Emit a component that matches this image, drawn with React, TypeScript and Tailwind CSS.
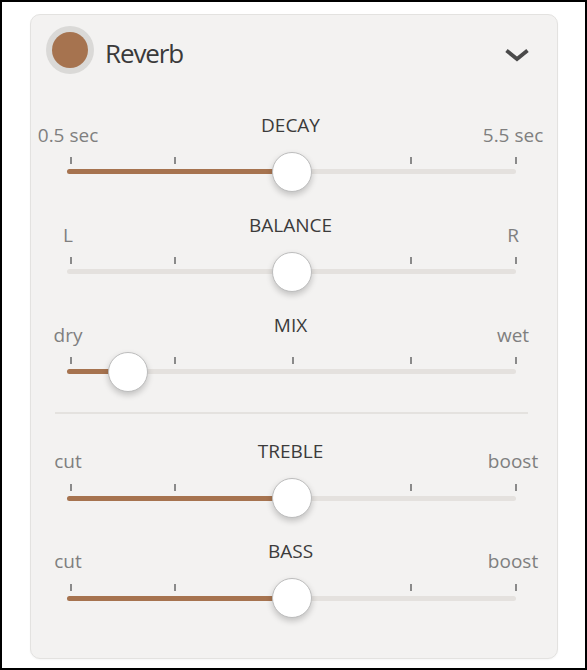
import React from 'react';

interface SliderProps {
  title: string;
  left: string;
  right: string;
  value: number;
  filled?: boolean;
}

// tick offsets along the 449px track
const TICKS = [3, 107, 225, 343, 448];

const Slider: React.FC<SliderProps> = ({ title, left, right, value, filled = true }) => {
  return (
    <div className="h-[100px] w-[449px]">
      <div className="flex h-[36px] justify-between">
        <div className="mt-[10px] flex w-0 justify-center whitespace-nowrap pl-[1px] text-[19px] leading-[26px] text-[#7f7f7f]">
          {left}
        </div>
        <div className="flex w-0 justify-center whitespace-nowrap text-[19px] leading-[26px] text-[#3b3b3b]">
          {title}
        </div>
        <div className="mt-[10px] flex w-0 justify-center whitespace-nowrap pr-[3px] text-[19px] leading-[26px] text-[#7f7f7f]">
          {right}
        </div>
      </div>
      <div className="relative mt-[9.5px] h-[7px]">
        {TICKS.map((x) => (
          <div key={x} className="absolute top-0 h-[7px] w-[1.5px] bg-[#8a8a8a]" style={{ left: x }} />
        ))}
      </div>
      <div className="relative mt-[5px] h-[5px] rounded-full bg-[#e4e1de]">
        {filled && (
          <div className="h-full rounded-full bg-[#a6734f]" style={{ width: `${value}%` }} />
        )}
        <div
          className="absolute top-1/2 h-[40px] w-[40px] -translate-x-1/2 -translate-y-1/2 rounded-full border-[1.5px] border-[#bdbdbd] bg-white shadow-[0_3px_6px_rgba(0,0,0,0.2)]"
          style={{ left: `${value}%` }}
        />
      </div>
    </div>
  );
};

export default function App() {
  return (
    <div className="h-[670px] w-[587px] border-2 border-black bg-white pb-[9px] pl-[28px] pr-[27px] pt-[12px] font-['Open_Sans',sans-serif]">
      <div className="flex h-full flex-col rounded-[10px] border border-[#e3e2e0] bg-[#f3f2f1] shadow-[0_1px_2px_rgba(0,0,0,0.04)]">
        <div className="flex items-start pl-[15px] pr-[27px] pt-[11px]">
          <div className="flex h-[48px] w-[48px] items-center justify-center rounded-full bg-[#dad9d7]">
            <div className="h-[36px] w-[36px] rounded-full bg-[#a6734f]" />
          </div>
          <div className="ml-[11px] mt-[8.5px] text-[26px] leading-[36px] tracking-[-1.1px] text-[#3a3a3a]">
            Reverb
          </div>
          <svg className="ml-auto mt-[22px]" width="26" height="14" viewBox="0 0 26 14" fill="none">
            <path d="M2.5 2.5 L13 11 L23.5 2.5" stroke="#4a4a4a" strokeWidth="3.8" strokeLinejoin="miter" />
          </svg>
        </div>
        <div className="mt-[37.5px] pl-[36px]">
          <Slider title="DECAY" left="0.5 sec" right="5.5 sec" value={50} />
          <Slider title="BALANCE" left="L" right="R" value={50} filled={false} />
          <Slider title="MIX" left="dry" right="wet" value={13.5} />
        </div>
        <div className="ml-[24px] mr-[29px] mt-[0.5px] h-[2px] bg-[#e4e2df]" />
        <div className="mt-[24px] pl-[36px]">
          <Slider title="TREBLE" left="cut" right="boost" value={50} />
          <Slider title="BASS" left="cut" right="boost" value={50} />
        </div>
      </div>
    </div>
  );
}
